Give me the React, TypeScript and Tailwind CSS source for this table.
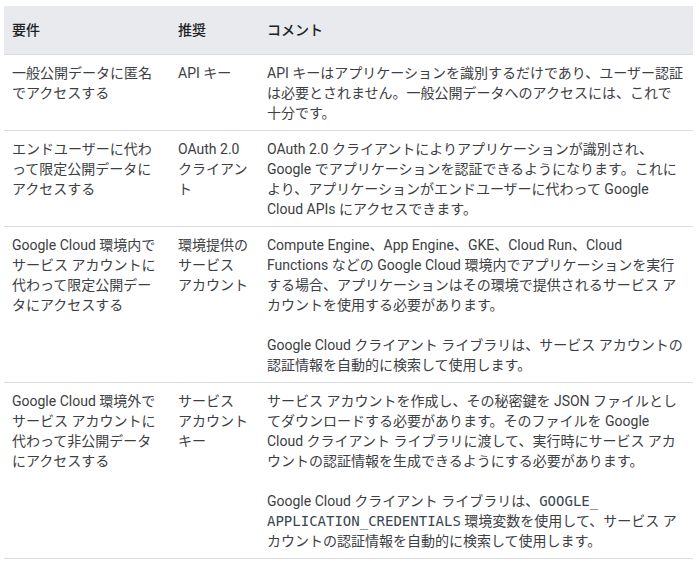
import React from "react";

const font = { fontFamily: "Roboto, 'Noto Sans CJK JP', sans-serif" };

function Code({ children }: { children: React.ReactNode }) {
  return (
    <code className="text-[14px] text-[#37474f] [font-family:'DejaVu_Sans_Mono',monospace]">
      {children}
    </code>
  );
}

const rows: { req: React.ReactNode; rec: React.ReactNode; note: React.ReactNode }[] = [
  {
    req: "一般公開データに匿名でアクセスする",
    rec: "API キー",
    note: (
      <p>
        API キーはアプリケーションを識別するだけであり、ユーザー認証は必要とされません。一般公開データへのアクセスには、これで十分です。
      </p>
    ),
  },
  {
    req: "エンドユーザーに代わって限定公開データにアクセスする",
    rec: "OAuth 2.0 クライアント",
    note: (
      <p>
        OAuth 2.0 クライアントによりアプリケーションが識別され、Google でアプリケーションを認証できるようになります。これにより、アプリケーションがエンドユーザーに代わって Google Cloud APIs にアクセスできます。
      </p>
    ),
  },
  {
    req: "Google Cloud 環境内でサービス アカウントに代わって限定公開データにアクセスする",
    rec: "環境提供のサービス アカウント",
    note: (
      <>
        <p>
          Compute Engine、App Engine、GKE、Cloud Run、Cloud Functions などの Google Cloud 環境内でアプリケーションを実行する場合、アプリケーションはその環境で提供されるサービス アカウントを使用する必要があります。
        </p>
        <p className="mt-5">
          Google Cloud クライアント ライブラリは、サービス アカウントの認証情報を自動的に検索して使用します。
        </p>
      </>
    ),
  },
  {
    req: "Google Cloud 環境外でサービス アカウントに代わって非公開データにアクセスする",
    rec: "サービス アカウント キー",
    note: (
      <>
        <p>
          サービス アカウントを作成し、その秘密鍵を JSON ファイルとしてダウンロードする必要があります。そのファイルを Google Cloud クライアント ライブラリに渡して、実行時にサービス アカウントの認証情報を生成できるようにする必要があります。
        </p>
        <p className="mt-5">
          Google Cloud クライアント ライブラリは、
          <Code>
            GOOGLE_
            <wbr />
            APPLICATION_CREDENTIALS
          </Code>{" "}
          環境変数を使用して、サービス アカウントの認証情報を自動的に検索して使用します。
        </p>
      </>
    ),
  },
];

export default function App() {
  return (
    <div className="min-h-[565px] bg-white pl-[4px] pr-[6px] pt-[6px]" style={font}>
      <table className="w-[689px] table-fixed border-collapse text-[14px] leading-[20px] text-[#3c4043]">
        <colgroup>
          <col className="w-[166px]" />
          <col className="w-[89px]" />
          <col />
        </colgroup>
        <thead>
          <tr className="border-b border-[#dadce0] bg-[#e8eaed]">
            <th className="px-2 py-[14px] text-left font-medium text-[#202124]">要件</th>
            <th className="px-2 py-[14px] text-left font-medium text-[#202124]">推奨</th>
            <th className="px-2 py-[14px] text-left font-medium text-[#202124]">コメント</th>
          </tr>
        </thead>
        <tbody>
          {rows.map((r, i) => (
            <tr key={i} className="border-b border-[#dadce0] align-top">
              <td className="px-2 pb-[7px] pt-2">{r.req}</td>
              <td className="px-2 pb-[7px] pt-2">{r.rec}</td>
              <td className="px-2 pb-[7px] pt-2">{r.note}</td>
            </tr>
          ))}
        </tbody>
      </table>
    </div>
  );
}
